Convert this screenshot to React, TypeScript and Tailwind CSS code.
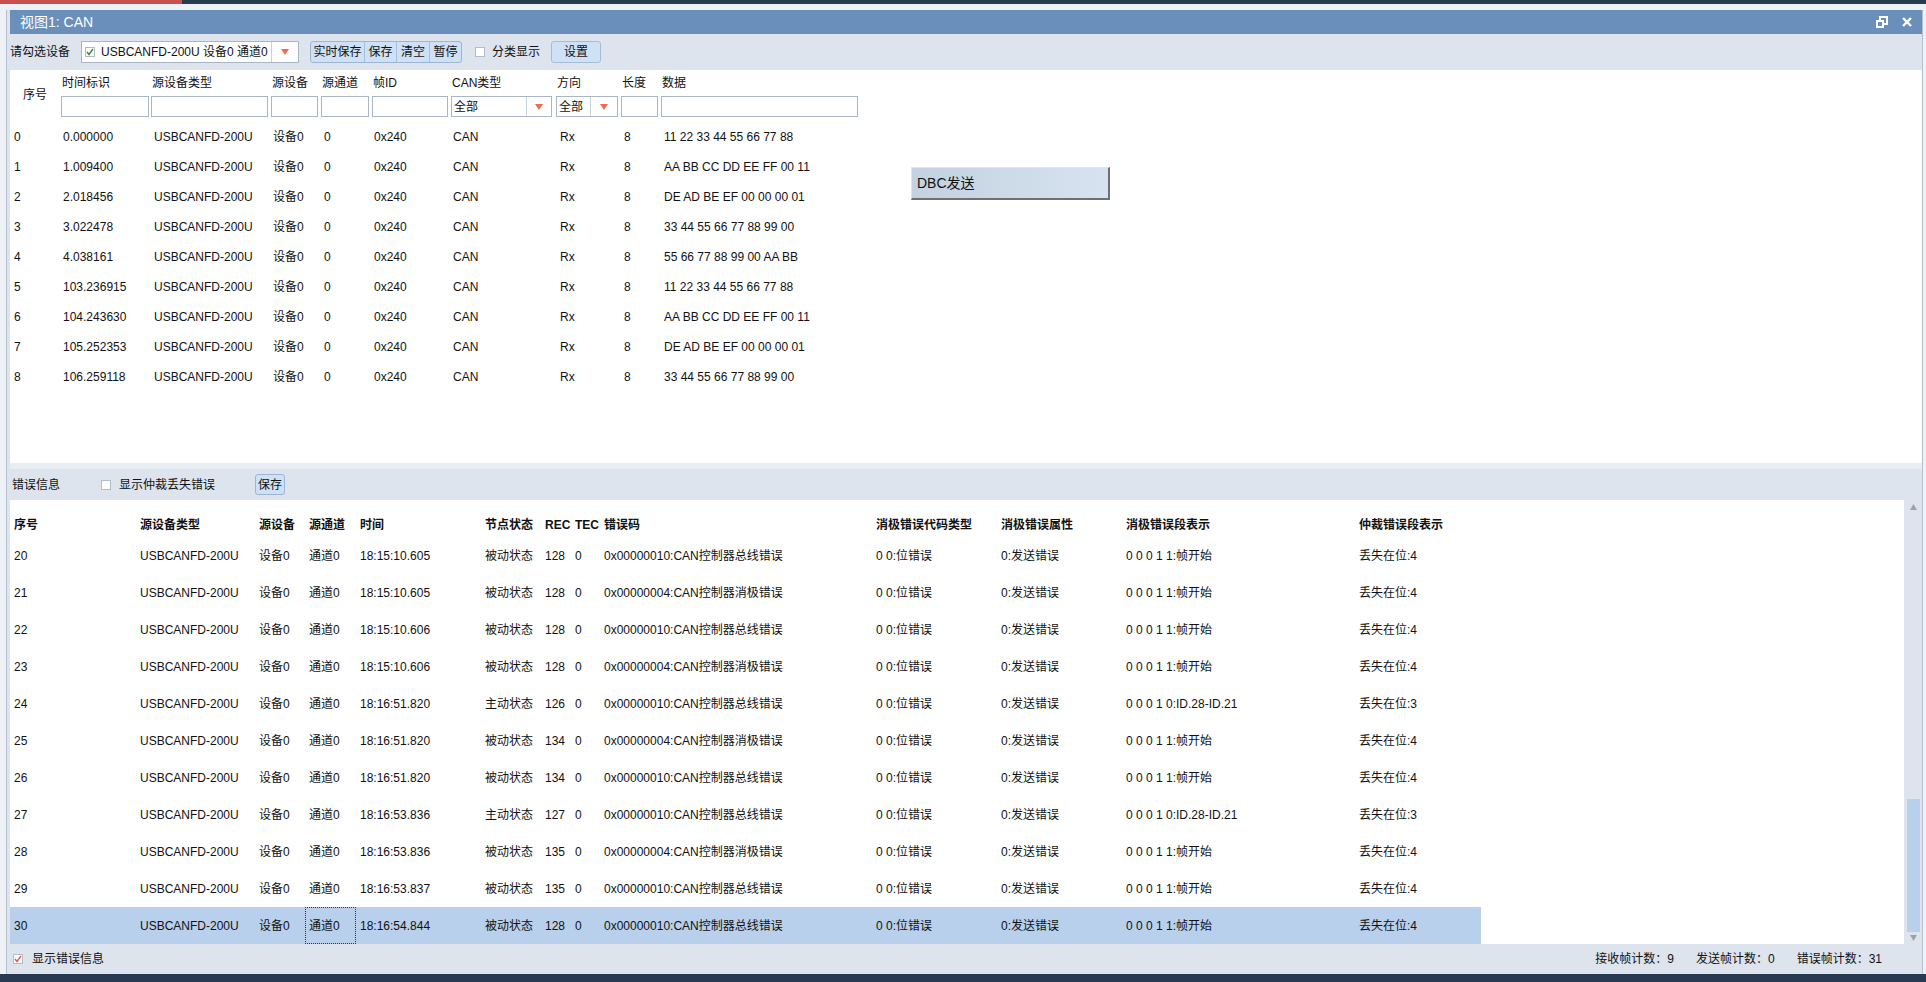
import React from 'react';

const font = "font-[family-name:'Liberation_Sans','Noto_Sans_CJK_SC',sans-serif]";

// upper frame table
const upperCols = [
  { key: 'idx', label: '序号', w: 'w-[51px]' },
  { key: 'time', label: '时间标识', w: 'w-[90px]' },
  { key: 'type', label: '源设备类型', w: 'w-[120px]' },
  { key: 'dev', label: '源设备', w: 'w-[50px]' },
  { key: 'ch', label: '源通道', w: 'w-[51px]' },
  { key: 'id', label: '帧ID', w: 'w-[79px]' },
  { key: 'can', label: 'CAN类型', w: 'w-[105px]' },
  { key: 'dir', label: '方向', w: 'w-[65px]' },
  { key: 'len', label: '长度', w: 'w-[40px]' },
  { key: 'data', label: '数据', w: 'w-[200px]' },
];

const frames = [
  ['0', '0.000000', '11 22 33 44 55 66 77 88'],
  ['1', '1.009400', 'AA BB CC DD EE FF 00 11'],
  ['2', '2.018456', 'DE AD BE EF 00 00 00 01'],
  ['3', '3.022478', '33 44 55 66 77 88 99 00'],
  ['4', '4.038161', '55 66 77 88 99 00 AA BB'],
  ['5', '103.236915', '11 22 33 44 55 66 77 88'],
  ['6', '104.243630', 'AA BB CC DD EE FF 00 11'],
  ['7', '105.252353', 'DE AD BE EF 00 00 00 01'],
  ['8', '106.259118', '33 44 55 66 77 88 99 00'],
];

// error table
const errCols = [
  { label: '序号', w: 'w-[126px]' },
  { label: '源设备类型', w: 'w-[119px]' },
  { label: '源设备', w: 'w-[50px]' },
  { label: '源通道', w: 'w-[51px]' },
  { label: '时间', w: 'w-[125px]' },
  { label: '节点状态', w: 'w-[60px]' },
  { label: 'REC', w: 'w-[30px]' },
  { label: 'TEC', w: 'w-[29px]' },
  { label: '错误码', w: 'w-[272px]' },
  { label: '消极错误代码类型', w: 'w-[125px]' },
  { label: '消极错误属性', w: 'w-[125px]' },
  { label: '消极错误段表示', w: 'w-[233px]' },
  { label: '仲裁错误段表示', w: 'w-[126px]' },
];

const BUS = '0x00000010:CAN控制器总线错误';
const NEG = '0x00000004:CAN控制器消极错误';
const SOF = '0 0 0 1 1:帧开始';
const IDS = '0 0 0 1 0:ID.28-ID.21';

const errors: [string, string, string, string, string, string, string][] = [
  ['20', '18:15:10.605', '被动状态', '128', BUS, SOF, '丢失在位:4'],
  ['21', '18:15:10.605', '被动状态', '128', NEG, SOF, '丢失在位:4'],
  ['22', '18:15:10.606', '被动状态', '128', BUS, SOF, '丢失在位:4'],
  ['23', '18:15:10.606', '被动状态', '128', NEG, SOF, '丢失在位:4'],
  ['24', '18:16:51.820', '主动状态', '126', BUS, IDS, '丢失在位:3'],
  ['25', '18:16:51.820', '被动状态', '134', NEG, SOF, '丢失在位:4'],
  ['26', '18:16:51.820', '被动状态', '134', BUS, SOF, '丢失在位:4'],
  ['27', '18:16:53.836', '主动状态', '127', BUS, IDS, '丢失在位:3'],
  ['28', '18:16:53.836', '被动状态', '135', NEG, SOF, '丢失在位:4'],
  ['29', '18:16:53.837', '被动状态', '135', BUS, SOF, '丢失在位:4'],
  ['30', '18:16:54.844', '被动状态', '128', BUS, SOF, '丢失在位:4'],
];

const Arrow = () => (
  <svg width="8" height="6" viewBox="0 0 8 6">
    <path d="M0 0 L8 0 L4 6 Z" fill="#f26b50" />
  </svg>
);

const Box = ({ mark }: { mark?: 'green' | 'red' }) => (
  <span className="w-[10px] h-[10px] border border-[#b3bcc8] bg-white flex items-center justify-center shrink-0">
    {mark && (
      <svg width="8" height="8" viewBox="0 0 8 8">
        <path
          d="M1 4 L3 6.5 L7 1"
          fill="none"
          stroke={mark === 'green' ? '#2f8c2f' : '#e0574f'}
          strokeWidth="1.4"
        />
      </svg>
    )}
  </span>
);

const Input = ({ w }: { w: string }) => (
  <div className={`${w} h-[21px] border border-[#aab6c4] bg-white`} />
);

const Select = ({ w, split }: { w: string; split: string }) => (
  <div className={`${w} h-[21px] border border-[#aab6c4] bg-white flex items-center`}>
    <span className={`${split} pl-[2px] border-r border-[#c9d1db] h-full flex items-center`}>全部</span>
    <span className="flex-1 flex items-center justify-center">
      <Arrow />
    </span>
  </div>
);

export default function App() {
  return (
    <div className={`${font} w-[1926px] h-[982px] flex flex-col bg-[#eef1f5] overflow-hidden text-[12px] text-[#111]`}>
      {/* taskbar strip */}
      <div className="h-[4px] bg-[#283a52] flex">
        <div className="w-[182px] bg-[#c9504f]" />
      </div>

      <div className="flex-1 flex pt-[6px] pl-[6px] pr-[3px] min-h-0">
        <div className="flex-1 flex flex-col border-x border-[#b4c0ce] bg-[#dde4ee] pl-[3px] min-w-0">
          {/* title bar */}
          <div className="h-[24px] bg-[#6a8fba] flex items-center pl-[10px] pr-[10px] text-white text-[14px]">
            <span>视图1: CAN</span>
            <div className="ml-auto flex items-center gap-[14px]">
              <svg width="12" height="12" viewBox="0 0 12 12">
                <rect x="1" y="5" width="6" height="6" fill="none" stroke="white" strokeWidth="2" />
                <path d="M4 4 V1 H11 V8 H8" fill="none" stroke="white" strokeWidth="2" />
              </svg>
              <svg width="10" height="10" viewBox="0 0 10 10">
                <path d="M1 1 L9 9 M9 1 L1 9" stroke="white" strokeWidth="2.4" />
              </svg>
            </div>
          </div>

          {/* toolbar */}
          <div className="h-[36px] flex items-center">
            <span>请勾选设备</span>
            <div className="ml-[11px] w-[218px] h-[22px] border border-[#aab6c4] bg-white flex items-center">
              <span className="pl-[3px]"><Box mark="green" /></span>
              <span className="w-[177px] pl-[6px] overflow-hidden whitespace-nowrap border-r border-[#c9d1db] h-full flex items-center">
                USBCANFD-200U 设备0 通道0
              </span>
              <span className="flex-1 flex justify-center"><Arrow /></span>
            </div>
            <div className="ml-[11px] h-[22px] flex border border-[#9db5d2] rounded-[3px] bg-[#cfe1f6] overflow-hidden">
              <span className="w-[54px] flex items-center justify-center border-r border-[#a9bfd9]">实时保存</span>
              <span className="w-[32px] flex items-center justify-center border-r border-[#a9bfd9]">保存</span>
              <span className="w-[33px] flex items-center justify-center border-r border-[#a9bfd9]">清空</span>
              <span className="w-[31px] flex items-center justify-center">暂停</span>
            </div>
            <span className="ml-[13px]"><Box /></span>
            <span className="ml-[7px]">分类显示</span>
            <span className="ml-[11px] w-[50px] h-[22px] flex items-center justify-center border border-[#a6bcd6] rounded-[3px] bg-[#cfe1f6]">设置</span>
          </div>

          {/* frame table */}
          <div className="h-[393px] bg-white relative">
            <div className="h-[52px] flex">
              {upperCols.map((c) =>
                c.key === 'idx' ? (
                  <div key={c.key} className={`${c.w} flex items-center pl-[13px] pb-[2px]`}>{c.label}</div>
                ) : (
                  <div key={c.key} className={`${c.w} flex flex-col`}>
                    <div className="h-[26px] flex items-center pl-[1px]">{c.label}</div>
                    {c.key === 'can' ? (
                      <Select w="w-[101px]" split="w-[75px]" />
                    ) : c.key === 'dir' ? (
                      <Select w="w-[62px]" split="w-[34px]" />
                    ) : (
                      <Input w={c.key === 'data' ? 'w-[197px]' : c.key === 'time' ? 'w-[88px]' : 'w-[calc(100%-3px)]'} />
                    )}
                  </div>
                )
              )}
            </div>
            {frames.map(([i, t, d]) => (
              <div key={i} className="h-[30px] flex items-center">
                <span className="w-[51px] pl-[4px]">{i}</span>
                <span className="w-[90px] pl-[2px]">{t}</span>
                <span className="w-[120px] pl-[3px]">USBCANFD-200U</span>
                <span className="w-[50px] pl-[2px]">设备0</span>
                <span className="w-[51px] pl-[3px]">0</span>
                <span className="w-[79px] pl-[2px]">0x240</span>
                <span className="w-[105px] pl-[2px]">CAN</span>
                <span className="w-[65px] pl-[4px]">Rx</span>
                <span className="w-[40px] pl-[3px]">8</span>
                <span className="w-[200px] pl-[3px]">{d}</span>
              </div>
            ))}

            {/* floating DBC button */}
            <div className="absolute left-[901px] top-[97px] w-[199px] h-[33px] border-t border-l border-t-[#e4e4e4] border-l-[#e4e4e4] border-r-2 border-b-2 border-r-[#707070] border-b-[#707070] bg-gradient-to-r from-[#c3d1e0] to-[#d7e3f0] flex items-center pl-[5px] text-[14px]">
              DBC发送
            </div>
          </div>

          <div className="h-[6px] bg-[#e9eef5]" />

          {/* error toolbar */}
          <div className="h-[31px] flex items-center">
            <span className="pl-[2px]">错误信息</span>
            <span className="ml-[41px]"><Box /></span>
            <span className="ml-[8px]">显示仲裁丢失错误</span>
            <span className="ml-[40px] w-[30px] h-[21px] flex items-center justify-center border border-[#9db5d2] rounded-[3px] bg-[#cfe1f6]">保存</span>
          </div>

          {/* error table */}
          <div className="h-[444px] flex">
            <div className="flex-1 bg-white min-w-0">
              <div className="h-[37px] flex items-end pb-[3px] font-bold">
                {errCols.map((c) => (
                  <span key={c.label} className={`${c.w} pl-[4px] whitespace-nowrap`}>{c.label}</span>
                ))}
              </div>
              {errors.map((r) => {
                const sel = r[0] === '30';
                return (
                  <div key={r[0]} className={`h-[37px] w-[1471px] flex items-center whitespace-nowrap ${sel ? 'bg-[#b9d0ec]' : ''}`}>
                    <span className="w-[126px] pl-[4px]">{r[0]}</span>
                    <span className="w-[119px] pl-[4px]">USBCANFD-200U</span>
                    <span className="w-[50px] pl-[4px]">设备0</span>
                    <span className={`w-[51px] h-full flex items-center ${sel ? 'border border-dotted border-[#333] pl-[3px]' : 'pl-[4px]'}`}>通道0</span>
                    <span className="w-[125px] pl-[4px]">{r[1]}</span>
                    <span className="w-[60px] pl-[4px]">{r[2]}</span>
                    <span className="w-[30px] pl-[4px]">{r[3]}</span>
                    <span className="w-[29px] pl-[4px]">0</span>
                    <span className="w-[272px] pl-[4px]">{r[4]}</span>
                    <span className="w-[125px] pl-[4px]">0 0:位错误</span>
                    <span className="w-[125px] pl-[4px]">0:发送错误</span>
                    <span className="w-[233px] pl-[4px]">{r[5]}</span>
                    <span className="w-[126px] pl-[4px]">{r[6]}</span>
                  </div>
                );
              })}
            </div>
            {/* scrollbar */}
            <div className="w-[18px] flex flex-col items-center pt-[4px] pb-[3px]">
              <svg width="7" height="6" viewBox="0 0 7 6"><path d="M0 6 L7 6 L3.5 0 Z" fill="#9aa3ad" /></svg>
              <div className="flex-1" />
              <div className="w-[13px] h-[133px] bg-[#b9d0ec]" />
              <svg className="mt-[3px]" width="7" height="6" viewBox="0 0 7 6"><path d="M0 0 L7 0 L3.5 6 Z" fill="#9aa3ad" /></svg>
            </div>
          </div>

          {/* status bar */}
          <div className="h-[30px] flex items-center pl-[3px] pr-[40px]">
            <Box mark="red" />
            <span className="ml-[9px]">显示错误信息</span>
            <div className="ml-auto flex items-center gap-[22px]">
              <span>接收帧计数：9</span>
              <span>发送帧计数：0</span>
              <span>错误帧计数：31</span>
            </div>
          </div>
        </div>
      </div>

      <div className="h-[8px] bg-[#283a52]" />
    </div>
  );
}
